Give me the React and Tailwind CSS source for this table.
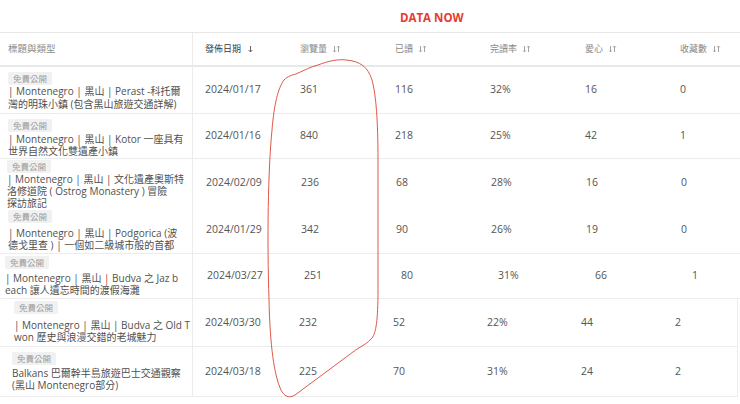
import React from "react";

const FONT = { fontFamily: '"Open Sans", "Noto Sans CJK TC", sans-serif' };

function SortIcon() {
  return (
    <svg width="9" height="8" viewBox="0 0 9 8" className="ml-[5px] inline-block">
      <path d="M2.5 1 V7 M1.2 5.6 L2.5 7 L3.8 5.6" stroke="#9a9a9a" strokeWidth="0.9" fill="none" />
      <path d="M6.5 7 V1 M5.2 2.4 L6.5 1 L7.8 2.4" stroke="#9a9a9a" strokeWidth="0.9" fill="none" />
    </svg>
  );
}

function DownIcon() {
  return (
    <svg width="7" height="8" viewBox="0 0 7 8" className="ml-[6px] inline-block">
      <path d="M3.5 1 V7 M1.6 5 L3.5 7 L5.4 5" stroke="#666" strokeWidth="1" fill="none" />
    </svg>
  );
}

const rows = [
  {
    h: "h-[47px]", pl: "pl-[8px]", pt: "pt-[5px]", mt: "mt-0", lead: "leading-[13px]", col: "w-[95px]", first: "pl-[12px]",
    border: "border-b border-[#ececec]", right: "",
    lines: [["| Montenegro | 黑山 | Perast -科托爾"], ["灣的明珠小鎮 (包含黑山旅遊交通詳解)"]],
    vals: ["2024/01/17", "361", "116", "32%", "16", "0"],
  },
  {
    h: "h-[45px]", pl: "pl-[8px]", pt: "pt-[5px]", mt: "mt-[1px]", lead: "leading-[12px]", col: "w-[95px]", first: "pl-[12px]",
    border: "border-b border-[#ececec]", right: "",
    lines: [["| Montenegro | 黑山 | Kotor 一座具有"], ["世界自然文化雙遺產小鎮"]],
    vals: ["2024/01/16", "840", "218", "25%", "42", "1"],
  },
  {
    h: "h-[47px]", pl: "pl-[7px]", pt: "pt-[1px]", mt: "mt-0", lead: "leading-[12px]", col: "w-[95px]", first: "pl-[13px]",
    border: "", right: "",
    lines: [["| Montenegro | 黑山 | 文化遺產奧斯特"], ["洛修道院 ( Ostrog Monastery ) 冒險"], ["探訪旅記"]],
    vals: ["2024/02/09", "236", "68", "28%", "16", "0"],
  },
  {
    h: "h-[48px]", pl: "pl-[8px]", pt: "pt-[4px]", mt: "mt-[4px]", lead: "leading-[12px]", col: "w-[95px]", first: "pl-[13px]",
    border: "border-b border-[#ececec]", right: "",
    lines: [["| Montenegro | 黑山 | Podgorica (波"], ["德戈里查 ) | 一個如二級城市般的首都"]],
    vals: ["2024/01/29", "342", "90", "26%", "19", "0"],
  },
  {
    h: "h-[45px]", pl: "pl-[5px]", pt: "pt-[2px]", mt: "mt-[3px]", lead: "leading-[12px]", col: "w-[97px]", first: "pl-[14px]",
    border: "border-b border-[#ececec]", right: "",
    lines: [["| Montenegro | 黑山 ", "|", " Budva 之 Jaz b"], ["each 讓人遺忘時間的渡假海灘"]],
    vals: ["2024/03/27", "251", "80", "31%", "66", "1"],
  },
  {
    h: "h-[48px]", pl: "pl-[14px]", pt: "pt-[2px]", mt: "mt-[5px]", lead: "leading-[12px]", col: "w-[94px]", first: "pl-[12px]",
    border: "border-b border-[#ececec]", right: "w-[738px] border-r border-[#ececec]",
    lines: [["| Montenegro | 黑山 | Budva 之 Old T"], ["won 歷史與浪漫交錯的老城魅力"]],
    vals: ["2024/03/30", "232", "52", "22%", "44", "2"],
  },
  {
    h: "h-[50px]", pl: "pl-[12px]", pt: "pt-[5px]", mt: "mt-[2px]", lead: "leading-[12px]", col: "w-[94px]", first: "pl-[12px]",
    border: "border-b border-[#ececec]", right: "w-[738px] border-r border-[#ececec]",
    lines: [["Balkans 巴爾幹半島旅遊巴士交通觀察"], ["(黑山 Montenegro部分)"]],
    vals: ["2024/03/18", "225", "70", "31%", "24", "2"],
  },
];

function Row({ r }) {
  return (
    <div className={`flex ${r.h} ${r.border} ${r.right}`}>
      <div className={`w-[193px] shrink-0 border-r border-[#ececec] ${r.pl} ${r.pt} flex flex-col items-start`}>
        <span className="h-[13px] px-[5px] bg-[#f1f1f1] text-[#9c9c9c] text-[8.5px] leading-[13px] rounded-[2px]">免費公開</span>
        <div className={`${r.mt} text-[10px] ${r.lead} text-[#505050] whitespace-nowrap`}>
          {r.lines.map((ln, i) => (
            <div key={i}>
              {ln.length === 3 ? (
                <>
                  {ln[0]}
                  <span className="text-[#b5473a]">{ln[1]}</span>
                  {ln[2]}
                </>
              ) : (
                ln[0]
              )}
            </div>
          ))}
        </div>
      </div>
      {r.vals.map((v, i) => (
        <div
          key={i}
          className={`${r.col} shrink-0 ${r.first} flex items-center text-[10.5px] text-[#555] whitespace-nowrap`}
        >
          {v}
        </div>
      ))}
    </div>
  );
}

export default function App() {
  const headers = ["瀏覽量", "已讀", "完讀率", "愛心", "收藏數"];
  return (
    <div className="relative w-[740px] h-[404px] bg-white overflow-hidden" style={FONT}>
      <div className="h-[32px] pl-[400px] pt-[10px] text-[11.5px] font-bold text-[#e63b2e] leading-[16px]">DATA NOW</div>
      <div className="border-t border-[#e8e8e8]">
        <div className="flex h-[34px] border-b-2 border-[#e8e8e8]">
          <div className="w-[193px] shrink-0 border-r border-[#ececec] pl-[8px] flex items-center text-[9.5px] text-[#8a8a8a]">
            標題與類型
          </div>
          <div className="w-[95px] shrink-0 pl-[12px] flex items-center text-[9px] text-[#3a3a3a]">
            發佈日期
            <DownIcon />
          </div>
          {headers.map((h) => (
            <div key={h} className="w-[95px] shrink-0 pl-[12px] flex items-center text-[9px] text-[#8a8a8a]">
              {h}
              <SortIcon />
            </div>
          ))}
        </div>
        {rows.map((r, i) => (
          <Row key={i} r={r} />
        ))}
      </div>
      <svg className="absolute left-0 top-0 pointer-events-none" width="740" height="404" viewBox="0 0 740 404">
        <path
          d="M296 74 C305 70 310 67 318 65 C328 61 338 59 346 60 C360 61 368 67 372 80 C376 95 378 120 378 160 L378 290 C378 320 376 333 372 338 C368 343 362 346 357 349 L295 395 C289 399 284 396 281 390 C274 375 270 345 269 300 C267 240 268 170 272 130 C274 105 278 88 284 80 C288 76 292 75 296 74 Z"
          stroke="#e0584a"
          strokeWidth="1"
          fill="none"
        />
      </svg>
    </div>
  );
}
